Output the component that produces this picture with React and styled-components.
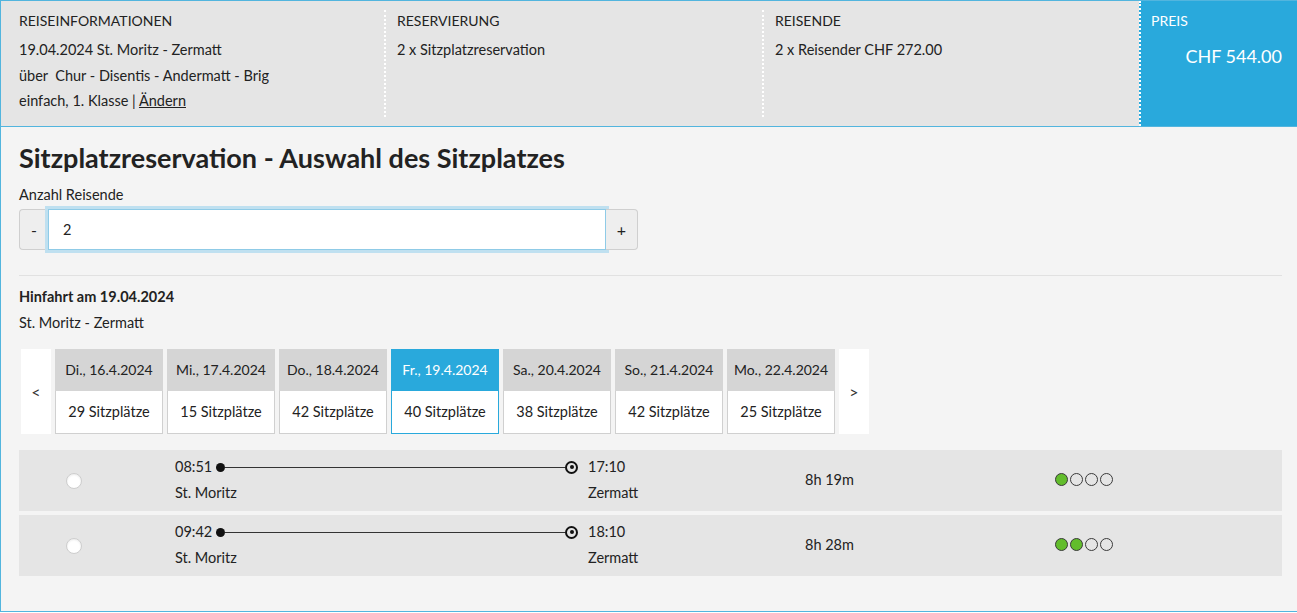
import React from "react";
import styled, { createGlobalStyle, css } from "styled-components";

const GlobalStyle = createGlobalStyle`
  html, body {
    margin: 0;
    padding: 0;
    overflow: hidden;
    background: #ffffff;
  }
  body {
    font-family: Lato, "Open Sans", "Liberation Sans", sans-serif;
    font-size: 14.5px;
    color: #222;
  }
  * {
    box-sizing: border-box;
  }
`;

const BLUE = "#29a9dc";

const Page = styled.div`
  height: 612px;
  border: 1px solid #52b5de;
  border-right: none;
  background: #f4f4f4;
  display: flex;
  flex-direction: column;
`;

/* ---------- summary header ---------- */

const Summary = styled.header`
  display: flex;
  height: 126px;
  background: #e5e5e5;
  border-bottom: 1px solid #52b5de;
`;

const SummaryCol = styled.section`
  width: ${(p) => p.$width}px;
  flex: none;
  ${(p) =>
    p.$first
      ? css`
          padding: 10px 0 0 18px;
        `
      : css`
          margin: 9px 0;
          padding: 1px 0 0 11px;
          border-left: 2px dotted #ffffff;
        `}
`;

const PriceCol = styled.section`
  flex: 1;
  background: ${BLUE};
  color: #fff;
  border-left: 2px dotted #ffffff;
  padding: 10px 15px 0 10px;
`;

const ColLabel = styled.div`
  text-transform: uppercase;
  font-size: 14px;
  line-height: 20px;
  margin-bottom: 6px;
`;

const ColLine = styled.div`
  line-height: 25.5px;
  white-space: nowrap;

  a {
    color: inherit;
    text-decoration: underline;
  }
`;

const PriceAmount = styled.div`
  margin-top: 12px;
  text-align: right;
  font-size: 18px;
  line-height: 26px;
`;

/* ---------- main ---------- */

const Main = styled.main`
  flex: 1;
  padding: 16px 15px 0 18px;
`;

const Title = styled.h1`
  margin: 0;
  font-size: 27px;
  line-height: 30px;
  font-weight: 700;
  color: #222;
`;

const FieldLabel = styled.label`
  display: block;
  margin-top: 12px;
  line-height: 20px;
`;

const Stepper = styled.div`
  display: flex;
  width: 619px;
  height: 41px;
  margin-top: 4px;
`;

const StepButton = styled.button`
  width: ${(p) => p.$width}px;
  flex: none;
  border: 1px solid #cfcfcf;
  background: #eeeeee;
  font: inherit;
  font-size: 16px;
  color: #222;
  border-radius: ${(p) => (p.$side === "left" ? "4px 0 0 4px" : "0 4px 4px 0")};
  ${(p) => (p.$side === "left" ? "border-right: none;" : "border-left: none;")}
  cursor: pointer;
`;

const StepInput = styled.input`
  flex: 1;
  min-width: 0;
  border: 1px solid #8fcbe7;
  box-shadow: 0 0 0 3px #bfe0f0;
  background: #fff;
  font: inherit;
  padding: 0 14px;
  color: #222;
  outline: none;
`;

const Divider = styled.hr`
  margin: 25px 0 0;
  border: none;
  border-top: 1px solid #e1e1e1;
`;

const TripTitle = styled.div`
  margin-top: 8px;
  line-height: 26px;
  font-weight: 700;
`;

const TripRoute = styled.div`
  line-height: 26px;
`;

/* ---------- date carousel ---------- */

const Carousel = styled.div`
  display: flex;
  gap: 4px;
  height: 85px;
  margin: 13px 0 0 2px;
`;

const Arrow = styled.button`
  width: 30px;
  flex: none;
  border: none;
  background: #fff;
  font: inherit;
  font-size: 16px;
  color: #333;
  padding: 0;
  cursor: pointer;
`;

const DayCard = styled.div`
  display: flex;
  flex-direction: column;
  flex: none;
  width: 108px;
  text-align: center;
  white-space: nowrap;
`;

const DayHead = styled.div`
  height: 42px;
  line-height: 42px;
  font-size: 14px;
  background: ${(p) => (p.$active ? BLUE : "#d5d5d5")};
  color: ${(p) => (p.$active ? "#fff" : "#222")};
`;

const DaySeats = styled.div`
  flex: 1;
  line-height: 41px;
  background: #fff;
  border: 1px solid ${(p) => (p.$active ? BLUE : "#d0d0d0")};
  border-top: none;
`;

/* ---------- connections ---------- */

const ConnectionList = styled.div`
  display: flex;
  flex-direction: column;
  gap: 4px;
  margin-top: 16px;
`;

const Connection = styled.div`
  display: grid;
  grid-template-columns: 110px 676px 250px 1fr;
  align-items: center;
  height: 61px;
  background: #e5e5e5;
`;

const Radio = styled.input.attrs({ type: "radio" })`
  appearance: none;
  justify-self: center;
  width: 16px;
  height: 16px;
  margin: 0;
  border-radius: 50%;
  background: #fff;
  border: 1px solid #cdcdcd;
  box-shadow: inset 0 1px 2px rgba(0, 0, 0, 0.08);
`;

const Journey = styled.div`
  display: grid;
  grid-template-columns: 41px 362px auto;
  padding-left: 46px;
  line-height: 26px;
  margin-top: -1px;
`;

const Time = styled.span`
  ${(p) => p.$arrival && "padding-left: 10px;"}
`;

const Station = styled.span`
  grid-column: ${(p) => (p.$arrival ? "3" : "1 / span 2")};
  ${(p) => p.$arrival && "padding-left: 10px;"}
`;

const Track = styled.div`
  display: flex;
  align-items: center;
`;

const StartDot = styled.span`
  width: 9px;
  height: 9px;
  flex: none;
  border-radius: 50%;
  background: #111;
`;

const TrackLine = styled.span`
  flex: 1;
  height: 1px;
  background: #333;
`;

const EndDot = styled.span`
  width: 13px;
  height: 13px;
  flex: none;
  border-radius: 50%;
  border: 2px solid #111;
  display: flex;
  align-items: center;
  justify-content: center;

  &::after {
    content: "";
    width: 4px;
    height: 4px;
    border-radius: 50%;
    background: #111;
  }
`;

const Duration = styled.div`
  margin-top: -2px;
`;

const Occupancy = styled.div`
  display: flex;
  gap: 2px;
  margin-top: -3px;
`;

const OccDot = styled.span`
  width: 13px;
  height: 13px;
  border-radius: 50%;
  border: 1px solid #3a3a3a;
  background: ${(p) => (p.$filled ? "#62bd2c" : "transparent")};
`;

const days = [
  { day: "Di., 16.4.2024", seats: 29 },
  { day: "Mi., 17.4.2024", seats: 15 },
  { day: "Do., 18.4.2024", seats: 42 },
  { day: "Fr., 19.4.2024", seats: 40, active: true },
  { day: "Sa., 20.4.2024", seats: 38 },
  { day: "So., 21.4.2024", seats: 42 },
  { day: "Mo., 22.4.2024", seats: 25 },
];

const connections = [
  { dep: "08:51", arr: "17:10", duration: "8h 19m", load: 1 },
  { dep: "09:42", arr: "18:10", duration: "8h 28m", load: 2 },
];

const App = () => {
  return (
    <>
      <GlobalStyle />
      <Page>
        <Summary>
          <SummaryCol $first $width={383}>
            <ColLabel>Reiseinformationen</ColLabel>
            <ColLine>19.04.2024 St. Moritz - Zermatt</ColLine>
            <ColLine>über&nbsp; Chur - Disentis - Andermatt - Brig</ColLine>
            <ColLine>
              einfach, 1. Klasse | <a href="#aendern">Ändern</a>
            </ColLine>
          </SummaryCol>
          <SummaryCol $width={378}>
            <ColLabel>Reservierung</ColLabel>
            <ColLine>2 x Sitzplatzreservation</ColLine>
          </SummaryCol>
          <SummaryCol $width={377}>
            <ColLabel>Reisende</ColLabel>
            <ColLine>2 x Reisender CHF 272.00</ColLine>
          </SummaryCol>
          <PriceCol>
            <ColLabel>Preis</ColLabel>
            <PriceAmount>CHF 544.00</PriceAmount>
          </PriceCol>
        </Summary>

        <Main>
          <Title>Sitzplatzreservation - Auswahl des Sitzplatzes</Title>
          <FieldLabel htmlFor="travellers">Anzahl Reisende</FieldLabel>
          <Stepper>
            <StepButton $side="left" $width={29}>
              -
            </StepButton>
            <StepInput id="travellers" defaultValue="2" />
            <StepButton $side="right" $width={32}>
              +
            </StepButton>
          </Stepper>

          <Divider />

          <TripTitle>Hinfahrt am 19.04.2024</TripTitle>
          <TripRoute>St. Moritz - Zermatt</TripRoute>

          <Carousel>
            <Arrow>&lt;</Arrow>
            {days.map((d) => (
              <DayCard key={d.day}>
                <DayHead $active={d.active}>{d.day}</DayHead>
                <DaySeats $active={d.active}>{d.seats} Sitzplätze</DaySeats>
              </DayCard>
            ))}
            <Arrow>&gt;</Arrow>
          </Carousel>

          <ConnectionList>
            {connections.map((c) => (
              <Connection key={c.dep}>
                <Radio name="connection" />
                <Journey>
                  <Time>{c.dep}</Time>
                  <Track>
                    <StartDot />
                    <TrackLine />
                    <EndDot />
                  </Track>
                  <Time $arrival>{c.arr}</Time>
                  <Station>St. Moritz</Station>
                  <Station $arrival>Zermatt</Station>
                </Journey>
                <Duration>{c.duration}</Duration>
                <Occupancy>
                  {[0, 1, 2, 3].map((i) => (
                    <OccDot key={i} $filled={i < c.load} />
                  ))}
                </Occupancy>
              </Connection>
            ))}
          </ConnectionList>
        </Main>
      </Page>
    </>
  );
};

export default App;
